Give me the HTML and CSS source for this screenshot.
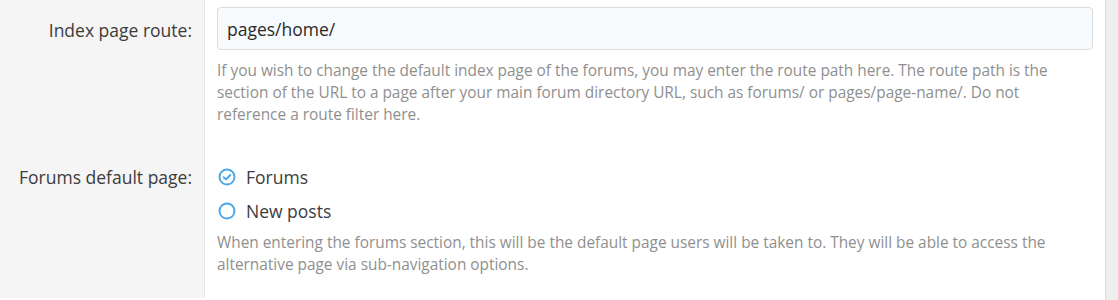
FILE: index.html
```html
<!DOCTYPE html>
<html lang="en">
<head>
    <meta charset="UTF-8">
    <meta name="viewport" content="width=device-width, initial-scale=1.0">
    <title>Options</title>
    <link rel="stylesheet" href="styles.css">
</head>
<body>
    <div class="block">
      <dl class="form-row">
        <dt class="form-label">
          <label for="indexRoute">Index page route:</label>
        </dt>
        <dd class="form-input">
          <input type="text" id="indexRoute" class="input" value="pages/home/">
          <p class="explain">If you wish to change the default index page of the forums, you may enter the route path here. The route path is the section of the URL to a page after your main forum directory URL, such as forums/ or pages/page-name/. Do not reference a route filter here.</p>
        </dd>
      </dl>

      <dl class="form-row form-row--radio">
        <dt class="form-label">
          <label>Forums default page:</label>
        </dt>
        <dd class="form-input">
          <ul class="radio-list">
            <li class="radio checked">
              <span class="radio-icon">
                <svg viewBox="0 0 18 18" width="18" height="18">
                  <circle cx="9" cy="9" r="7.5" fill="none" stroke="#4aa6e6" stroke-width="1.9"/>
                  <path d="M5.7 9.2 L8 11.4 L12.3 7" fill="none" stroke="#4aa6e6" stroke-width="1.9" stroke-linecap="round" stroke-linejoin="round"/>
                </svg>
              </span>
              Forums
            </li>
            <li class="radio">
              <span class="radio-icon">
                <svg viewBox="0 0 18 18" width="18" height="18">
                  <circle cx="9" cy="9" r="7.5" fill="none" stroke="#4aa6e6" stroke-width="1.9"/>
                </svg>
              </span>
              New posts
            </li>
          </ul>
          <p class="explain">When entering the forums section, this will be the default page users will be taken to. They will be able to access the alternative page via sub-navigation options.</p>
        </dd>
      </dl>
    </div>
</body>
</html>
```

FILE: styles.css
```css
body {
  margin: 0;
  background-color: #eeeeee;
  font-family: "Open Sans", "Noto Sans", Arial, sans-serif;
  color: #3a3a3a;
}

.block {
  width: 1105px;
  height: 300px;
  background-color: #fff;
  border-right: 1px solid #dcdcdc;
}

.form-row {
  display: flex;
  margin: 0;
}

.form-label {
  box-sizing: border-box;
  width: 205px;
  flex-shrink: 0;
  padding: 18px 12px 0 0;
  background-color: #f5f5f5;
  border-right: 1px solid #e7e7e7;
  text-align: right;
  font-size: 17.5px;
  line-height: 24px;
  color: #3c3c3c;
}

.form-row--radio .form-label {
  padding-top: 17px;
  padding-bottom: 30px;
}

.form-input {
  flex: 1;
  margin: 0;
  padding: 7px 12px 22px 12px;
}

.form-row--radio .form-input {
  padding-top: 12px;
}

.input {
  box-sizing: border-box;
  width: 100%;
  height: 43px;
  padding: 0 9px;
  border: 1px solid #d8dde2;
  border-radius: 4px;
  background-color: #f7fbfe;
  font-family: inherit;
  font-size: 17.5px;
  color: #2a2a2a;
}

.explain {
  max-width: 846px;
  margin: 10px 0 0;
  font-size: 15.4px;
  line-height: 22px;
  color: #8f8f8f;
}

.form-row--radio .explain {
  margin-top: 4px;
}

.radio-list {
  list-style: none;
  margin: 0;
  padding: 0;
}

.radio {
  display: flex;
  align-items: center;
  gap: 10px;
  height: 34px;
  font-size: 17.5px;
  color: #3c3c3c;
}

.radio-icon {
  display: flex;
  margin-left: 1px;
}
```
